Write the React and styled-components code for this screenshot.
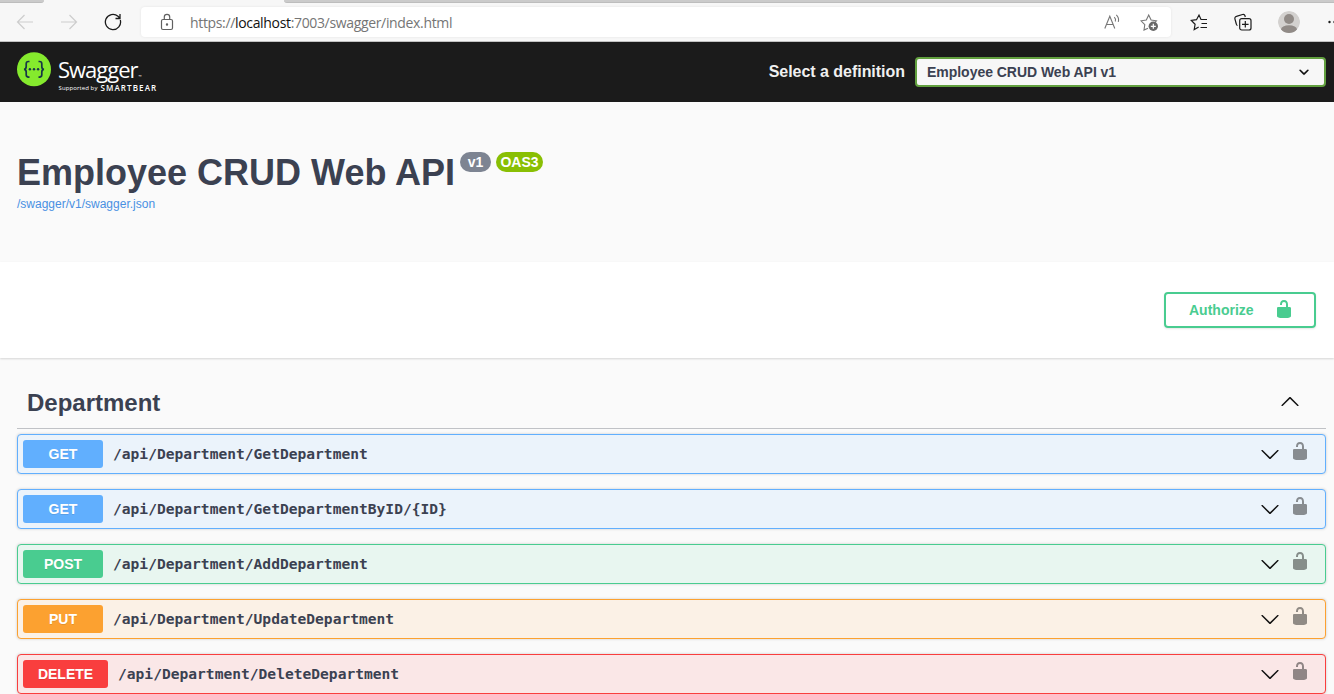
import React from "react";
import styled, { createGlobalStyle } from "styled-components";

const GlobalStyle = createGlobalStyle`
  * { box-sizing: border-box; }
  body { margin: 0; overflow: hidden; background: #fafafa; }
`;

const Page = styled.div`
  width: 1334px;
  height: 694px;
  overflow: hidden;
  background: #fafafa;
  color: #3b4151;
  font-family: "Liberation Sans", Arial, sans-serif;
`;

const Browser = styled.div`
  height: 42px;
  background: #f7f7f7;
  border-bottom: 1px solid #c2c2c2;
`;

const TabStrip = styled.div`
  display: flex;
  justify-content: space-between;
  height: 3px;
`;

const InactiveTab = styled.div`
  width: ${(p) => p.$width}px;
  background: #cbcbcb;
  border-bottom: 1px solid #bdbdbd;
  border-radius: ${(p) => p.$radius};
`;

const NavRow = styled.div`
  display: flex;
  align-items: center;
  height: 38px;
  padding-left: 16px;
  overflow: hidden;
`;

const NavIcon = styled.svg`
  flex: none;
  width: 18px;
  height: 18px;
  margin-right: ${(p) => p.$gap || 0}px;
  fill: none;
  stroke: ${(p) => p.$color || "#1b1b1b"};
  stroke-width: ${(p) => p.$weight || 1.2};
`;

const AddressBar = styled.div`
  display: flex;
  flex: none;
  align-items: center;
  width: 1030px;
  height: 30px;
  margin-right: 19px;
  padding-left: 17px;
  border-radius: 4px;
  background: #fff;
  box-shadow: 0 0 3px rgba(0, 0, 0, 0.08);
`;

const Url = styled.div`
  flex: 1;
  padding: 1px 0 0 14px;
  color: #757575;
  font: 14px/20px "Open Sans", "Noto Sans", sans-serif;
  letter-spacing: -0.34px;
  white-space: nowrap;
  b { color: #111; font-weight: 400; }
`;

const Avatar = styled.svg`
  flex: none;
  width: 22px;
  height: 22px;
  margin-right: 27px;
`;

const TopBar = styled.header`
  display: flex;
  justify-content: space-between;
  height: 60px;
  padding: 10px 8px 0 17px;
  background: #1b1b1b;
`;

const Logo = styled.div`
  display: flex;
  gap: 7px;
  color: #fff;
`;

const LogoMark = styled.svg`
  width: 34px;
  height: 35px;
`;

const LogoText = styled.div`
  font-family: "Open Sans", sans-serif;
  white-space: nowrap;
`;

const LogoName = styled.div`
  height: 31px;
  padding-top: 2px;
  font-size: 22px;
  line-height: 30px;
  letter-spacing: -1px;
  font-weight: 400;
  small { padding-left: 1px; font-size: 4px; letter-spacing: 0; }
`;

const LogoTagline = styled.div`
  display: flex;
  gap: 3px;
  padding-left: 0.5px;
  font-size: 6px;
  line-height: 10px;
  letter-spacing: 0.1px;
  strong { font-size: 8px; letter-spacing: 1.1px; font-weight: 600; }
`;

const Definition = styled.label`
  display: flex;
  align-items: center;
  gap: 10px;
  height: 40px;
  color: #f0f0f0;
  font-size: 16px;
  font-weight: 700;
  letter-spacing: -0.03px;
`;

const SelectBox = styled.div`
  display: flex;
  align-items: center;
  justify-content: space-between;
  width: 411px;
  height: 30px;
  padding: 0 10px 0 10px;
  border: 2px solid #62a03f;
  border-radius: 4px;
  background: #f7f7f7;
  color: #3b4151;
  font-size: 14px;
`;

const Info = styled.section`
  height: 160px;
  padding: 48px 17px 0;
`;

const Title = styled.h1`
  display: flex;
  align-items: flex-start;
  height: 46px;
  margin: 0;
  font-size: 36px;
  line-height: 46px;
  white-space: nowrap;
`;

const TitleText = styled.span`
  width: 443px;
`;

const VersionBadge = styled.span`
  width: ${(p) => p.$width}px;
  height: 20px;
  margin: 2px 5px 0 0;
  border-radius: 10px;
  background: ${(p) => p.$color};
  color: #fff;
  font-size: 14px;
  line-height: 21px;
  text-align: center;
`;

const SpecLink = styled.a`
  display: block;
  color: #4990e2;
  font-size: 12px;
  line-height: 14px;
  padding-top: 1px;
`;

const SchemeBar = styled.section`
  display: flex;
  justify-content: flex-end;
  height: 96px;
  padding: 30px 18px;
  background: #fff;
  box-shadow: 0 1px 2px rgba(0, 0, 0, 0.15);
`;

const AuthorizeButton = styled.button`
  display: flex;
  align-items: center;
  justify-content: space-between;
  width: 152px;
  height: 36px;
  padding: 0 20px 0 23px;
  border: 2px solid #49cc90;
  border-radius: 4px;
  background: transparent;
  box-shadow: 0 1px 2px rgba(0, 0, 0, 0.1);
  color: #49cc90;
  font: 700 14px "Liberation Sans", Arial, sans-serif;
`;

const Icon = styled.svg`
  flex: none;
  width: 20px;
  height: 20px;
  margin-top: ${(p) => p.$shift || 0}px;
  fill: currentColor;
  opacity: ${(p) => p.$opacity || 1};
`;

const TagSection = styled.section`
  padding: 17px 8px 0 17px;
`;

const TagHeader = styled.h2`
  display: flex;
  align-items: center;
  justify-content: space-between;
  height: 54px;
  margin: 0 0 5px;
  padding: 0 26px 0 10px;
  border-bottom: 1px solid rgba(59, 65, 81, 0.3);
  font-size: 24px;
  svg { color: #111; }
`;

const TagName = styled.span`
  padding-top: 2px;
`;

const Operations = styled.div`
  display: flex;
  flex-direction: column;
  gap: 15px;
`;

const Operation = styled.div`
  display: flex;
  align-items: center;
  height: 40px;
  padding: 0 15px 0 5px;
  border: 1px solid ${(p) => p.$color};
  border-radius: 4px;
  background: ${(p) => p.$tint};
  box-shadow: 0 0 3px rgba(0, 0, 0, 0.19);
`;

const Method = styled.span`
  width: ${(p) => (p.$wide ? 85 : 80)}px;
  height: 28px;
  border-radius: 3px;
  background: ${(p) => p.$color};
  color: #fff;
  font-size: 14px;
  font-weight: 700;
  line-height: 29px;
  text-align: center;
  text-shadow: 0 1px 0 rgba(0, 0, 0, 0.1);
`;

const Path = styled.span`
  flex: 1;
  padding: 0 0 2px 10px;
  font: 700 14.6px "DejaVu Sans Mono", monospace;
`;

const Controls = styled.span`
  display: flex;
  align-items: center;
  gap: 10px;
  color: #111;
`;

const UnlockIcon = (props) => (
  <Icon viewBox="0 0 20 20" {...props}>
    <path d="M15.8 8H14V5.6C14 2.703 12.665 1 10 1 7.334 1 6 2.703 6 5.6V6h2v-.801C8 3.754 8.797 3 10 3c1.203 0 2 .754 2 2.199V8H4c-.553 0-1 .646-1 1.199V17c0 .549.428 1.139.951 1.307l1.197.387C5.672 18.861 6.55 19 7.1 19h5.8c.549 0 1.428-.139 1.951-.307l1.196-.387c.524-.167.953-.757.953-1.306V9.199C17 8.646 16.352 8 15.8 8z" />
  </Icon>
);

const ArrowDown = (props) => (
  <Icon viewBox="0 0 20 20" {...props}>
    <path d="M17.418 6.109c.272-.268.709-.268.979 0s.271.701 0 .969l-7.908 7.83c-.27.268-.707.268-.979 0l-7.908-7.83c-.27-.268-.27-.701 0-.969.271-.268.709-.268.979 0L10 13.25l7.418-7.141z" />
  </Icon>
);

const ArrowUp = (props) => (
  <Icon viewBox="0 0 20 20" {...props}>
    <path d="M17.418 14.908c.272.268.709.268.979 0s.271-.701 0-.969L10.489 6.109c-.27-.268-.707-.268-.979 0l-7.908 7.83c-.27.268-.27.701 0 .969.271.268.709.268.979 0L10 7.767l7.418 7.141z" />
  </Icon>
);

const SelectArrow = () => (
  <Icon viewBox="0 0 20 20">
    <path d="M13.418 7.859c.271-.268.709-.268.978 0 .27.268.272.701 0 .969l-3.908 3.83c-.27.268-.707.268-.979 0l-3.908-3.83c-.27-.267-.27-.701 0-.969.271-.268.709-.268.978 0L10 11l3.418-3.141z" fill="#111" stroke="#111" strokeWidth=".2" />
  </Icon>
);

const BLUE = ["#61affe", "#ebf3fb"];
const operations = [
  { method: "GET", path: "/api/Department/GetDepartment", colors: BLUE },
  { method: "GET", path: "/api/Department/GetDepartmentByID/{ID}", colors: BLUE },
  { method: "POST", path: "/api/Department/AddDepartment", colors: ["#49cc90", "#e8f6f0"] },
  { method: "PUT", path: "/api/Department/UpdateDepartment", colors: ["#fca130", "#fbf1e6"] },
  { method: "DELETE", path: "/api/Department/DeleteDepartment", colors: ["#f93e3e", "#fae7e7"] },
];

function BrowserChrome() {
  return (
    <Browser>
      <TabStrip>
        <InactiveTab $width={44} $radius="0 0 4px 0" />
        <InactiveTab $width={1050} $radius="0 0 0 4px" />
      </TabStrip>
      <NavRow>
        <NavIcon viewBox="0 0 18 18" $gap={26} $color="#cdcdcd">
          <path d="M17 9H1.5M8.5 2 1.5 9l7 7" />
        </NavIcon>
        <NavIcon viewBox="0 0 18 18" $gap={26} $color="#cdcdcd">
          <path d="M1 9h15.500M9.500 2l7 7-7 7" />
        </NavIcon>
        <NavIcon viewBox="0 0 18 18" $gap={19} $weight={1.3}>
          <path d="M16.300 7A7.600 7.600 0 1 1 14 3.300l2 2M16 1v4.500h-4.500" />
        </NavIcon>
        <AddressBar>
          <NavIcon viewBox="0 0 18 18" $color="#606060">
            <rect x="3.500" y="6.500" width="11" height="10" rx="1.500" />
            <path d="M6.300 6.500V4a2.700 2.700 0 0 1 5.400 0v2.500" />
            <circle cx="9" cy="11.500" r=".6" fill="#606060" />
          </NavIcon>
          <Url>
            https://<b>localhost</b>:7003/swagger/index.html
          </Url>
          <NavIcon viewBox="0 0 18 18" $gap={18} $color="#767676" $weight={1.1}>
            <path d="M.8 15.500 5.800 3.200l5 12.300M2.500 11.500h6.600M10.300 4.200a4 4 0 0 1 1 4.300M12.300 1.800a7 7 0 0 1 2 7" />
          </NavIcon>
          <NavIcon viewBox="0 0 18 18" $gap={13} $color="#767676" $weight={1.1}>
            <path d="M8 15.200 4 17l.8-5.300L1 7.800l5.300-.8L8.700 2l2.400 5 5.300.8-2 2" />
            <circle cx="13.300" cy="13.300" r="4.700" fill="#686868" stroke="none" />
            <path d="M13.300 10.800v5M10.800 13.300h5" stroke="#fff" strokeWidth="1.200" />
          </NavIcon>
        </AddressBar>
        <NavIcon viewBox="0 0 18 18" $gap={26}>
          <path d="M8.700 14 4.200 16.500l.9-5.200L1.300 7.500l5.200-.8L9 2l2 4.500h6M11.500 10.500H17M10.500 14.500H17" />
        </NavIcon>
        <NavIcon viewBox="0 0 18 18" $gap={26}>
          <path d="M3.500 12.500A2 2 0 0 1 2.300 11L.9 5.800a2 2 0 0 1 1.500-2.400L8.500 1.500a2 2 0 0 1 2.500 1.300l.3 1.200" />
          <rect x="5.700" y="5.700" width="11.300" height="11.300" rx="2" />
          <path d="M11.300 8v6.600M8 11.300h6.600" />
        </NavIcon>
        <Avatar viewBox="0 0 22 22">
          <clipPath id="avatar"><circle cx="11" cy="11" r="11" /></clipPath>
          <g clipPath="url(#avatar)">
            <circle cx="11" cy="11" r="11" fill="#d3d1cf" />
            <circle cx="11" cy="8" r="5" fill="#918b87" />
            <ellipse cx="11" cy="18.500" rx="8" ry="4.200" fill="#918b87" />
          </g>
        </Avatar>
        <NavIcon viewBox="0 0 18 18">
          <circle cx="2.500" cy="9" r="1.200" fill="#1b1b1b" stroke="none" />
          <circle cx="7.500" cy="9" r="1.200" fill="#1b1b1b" stroke="none" />
          <circle cx="12.500" cy="9" r="1.200" fill="#1b1b1b" stroke="none" />
        </NavIcon>
      </NavRow>
    </Browser>
  );
}

export default function App() {
  return (
    <Page>
      <GlobalStyle />
      <BrowserChrome />
      <TopBar>
        <Logo>
          <LogoMark viewBox="0 0 34 35">
            <circle cx="17" cy="17.300" r="17" fill="#85ea2d" />
            <g fill="none" stroke="#173647" strokeWidth="1.700">
              <path d="M12.500 9.500h-1c-1.700 0-2.300.8-2.300 2.300v2.700c0 1.700-.6 2.700-2.200 2.800 1.600.1 2.200 1.100 2.200 2.800v2.700c0 1.500.6 2.300 2.300 2.300h1" />
              <path d="M21.500 9.500h1c1.700 0 2.300.8 2.300 2.300v2.700c0 1.700.6 2.700 2.200 2.800-1.600.1-2.200 1.100-2.200 2.800v2.700c0 1.500-.6 2.300-2.300 2.300h-1" />
            </g>
            <g fill="#173647">
              <circle cx="12.900" cy="17.300" r="1.200" />
              <circle cx="17" cy="17.300" r="1.200" />
              <circle cx="21.100" cy="17.300" r="1.200" />
            </g>
          </LogoMark>
          <LogoText>
            <LogoName>Swagger<small>™</small></LogoName>
            <LogoTagline>Supported by <strong>SMARTBEAR</strong></LogoTagline>
          </LogoText>
        </Logo>
        <Definition>
          Select a definition
          <SelectBox>
            Employee CRUD Web API v1
            <SelectArrow />
          </SelectBox>
        </Definition>
      </TopBar>
      <Info>
        <Title>
          <TitleText>Employee CRUD Web API</TitleText>
          <VersionBadge $width={31} $color="#7d8492">v1</VersionBadge>
          <VersionBadge $width={47} $color="#89bf04">OAS3</VersionBadge>
        </Title>
        <SpecLink>/swagger/v1/swagger.json</SpecLink>
      </Info>
      <SchemeBar>
        <AuthorizeButton>
          Authorize
          <UnlockIcon $shift={-2} />
        </AuthorizeButton>
      </SchemeBar>
      <TagSection>
        <TagHeader>
          <TagName>Department</TagName>
          <ArrowUp $shift={-2} />
        </TagHeader>
        <Operations>
          {operations.map(({ method, path, colors }) => (
            <Operation key={path} $color={colors[0]} $tint={colors[1]}>
              <Method $color={colors[0]} $wide={method === "DELETE"}>{method}</Method>
              <Path>{path}</Path>
              <Controls>
                <ArrowDown />
                <UnlockIcon $opacity={0.45} $shift={-6} />
              </Controls>
            </Operation>
          ))}
        </Operations>
      </TagSection>
    </Page>
  );
}
